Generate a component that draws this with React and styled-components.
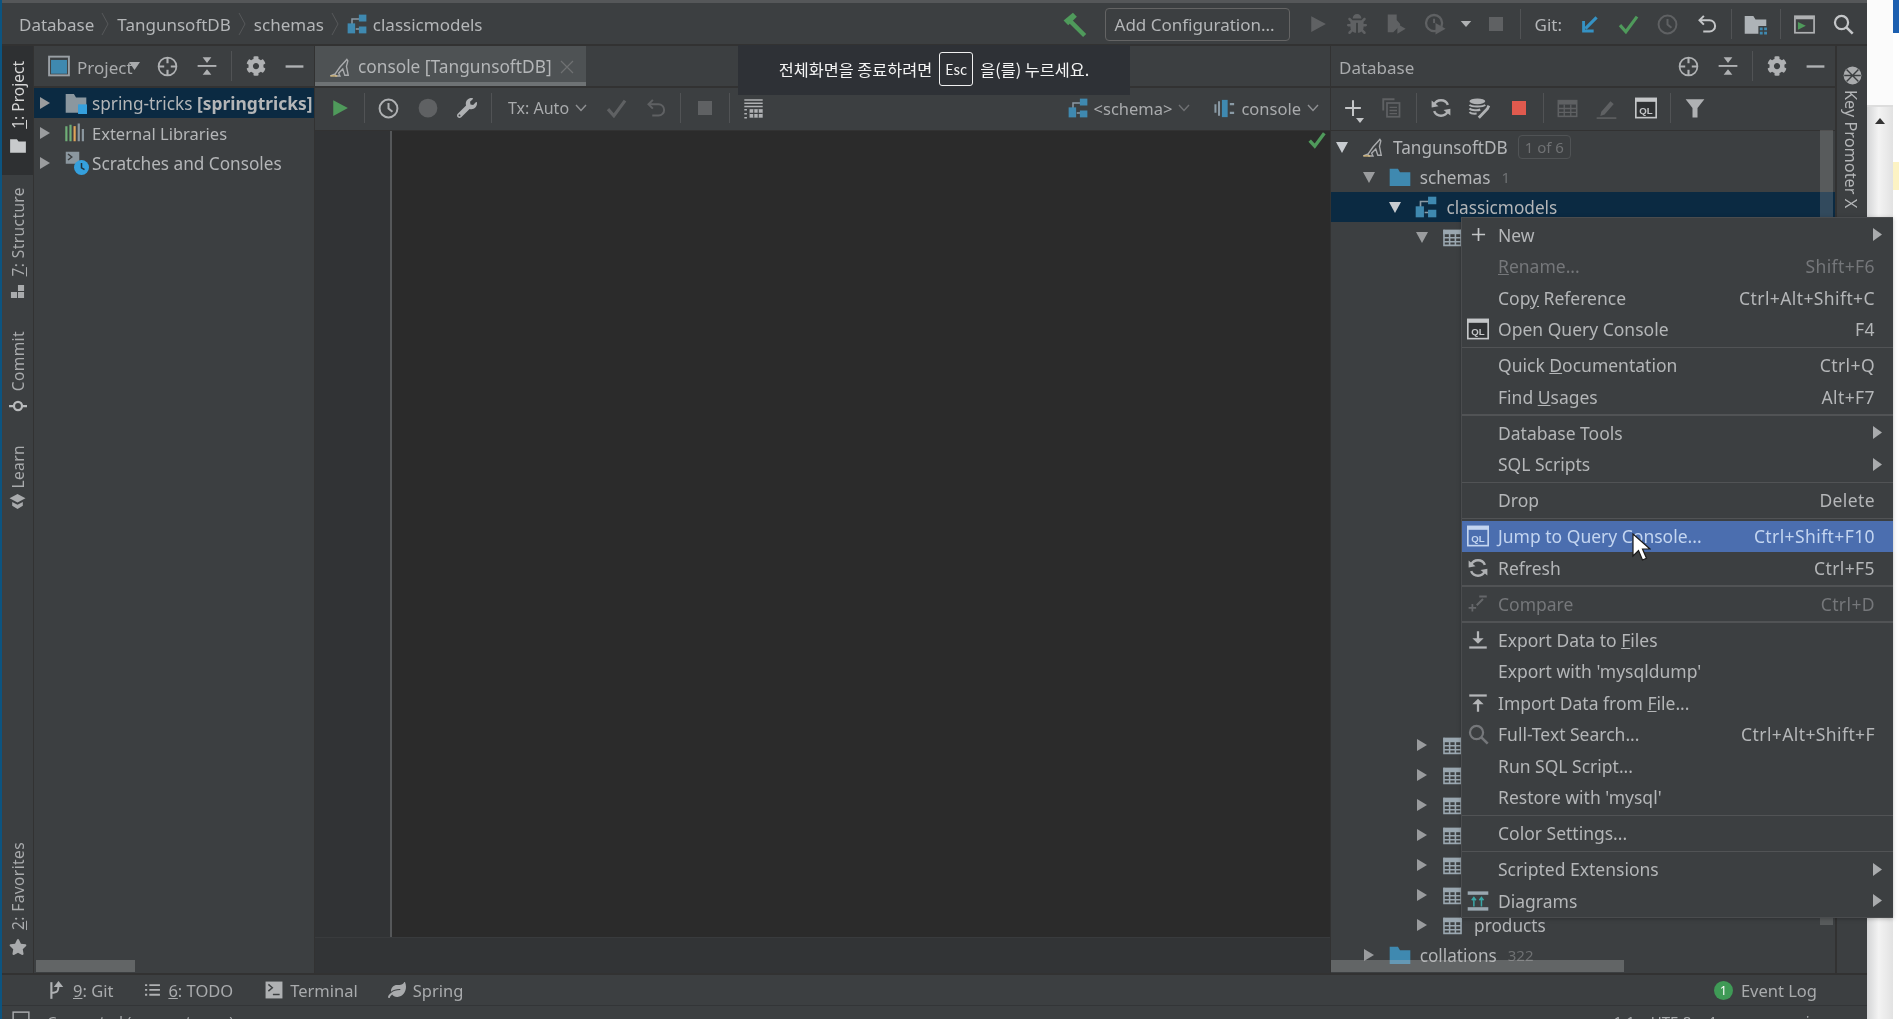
import React from 'react';
import styled, { createGlobalStyle } from 'styled-components';
import { FaCog, FaWrench, FaBug, FaLeaf, FaStar } from 'react-icons/fa';

const GlobalStyle = createGlobalStyle`
    html, body {
        margin: 0;
        height: 100%;
        overflow: hidden;
        background: #fff;
        font-family: "Noto Sans", "Noto Sans CJK KR", sans-serif;
    }
`;

const Page = styled.div`
    width: 100vw;
    height: 100vh;
    display: flex;
    overflow: hidden;
    position: relative;
    color: #bbbbbb;
    font-size: 16px;
    filter: blur(0.35px);
`;

const DesktopEdge = styled.div`
    width: 2px;
    flex-shrink: 0;
    background: #0c5480;
`;

const Ide = styled.div`
    width: 1865px;
    flex-shrink: 0;
    display: flex;
    flex-direction: column;
    background: #3c3f41;
    border-top: 3px solid #555759;
    box-sizing: border-box;
`;

const NavBar = styled.div`
    height: 43px;
    flex-shrink: 0;
    display: flex;
    align-items: center;
    padding: 1px 4px 0 17px;
    box-sizing: border-box;
    border-bottom: 2px solid #323232;
`;

const Crumb = styled.span`
    margin-left: ${(p) => p.$ml || 0}px;
    font-size: 17px;
    color: #b4b6b8;
    white-space: nowrap;
`;

const CrumbSep = styled.svg`
    width: 8px;
    height: 26px;
    margin: 0 8px 0 7px;
    flex-shrink: 0;
`;

const NavRight = styled.div`
    margin-left: auto;
    display: flex;
    align-items: center;
`;

const ConfigButton = styled.div`
    width: 185px;
    height: 33px;
    box-sizing: border-box;
    margin: 0 9px 0 11px;
    padding-left: 9px;
    border: 1px solid #646464;
    border-radius: 4px;
    display: flex;
    align-items: center;
    font-size: 17px;
    color: #b4b6b8;
    white-space: nowrap;
`;

const Slot = styled.div`
    width: ${(p) => p.$w || 39}px;
    height: 30px;
    margin-left: ${(p) => p.$ml || 0}px;
    flex-shrink: 0;
    display: flex;
    align-items: center;
    justify-content: center;
    position: relative;
    color: ${(p) => p.$c || '#afb1b3'};
`;

const Sep = styled.div`
    width: 1px;
    height: 30px;
    margin: 0 4.5px;
    flex-shrink: 0;
    background: #515355;
`;

const GitLabel = styled.span`
    margin: 0 8px 0 9px;
    font-size: 17px;
    color: #b4b6b8;
`;

const Main = styled.div`
    flex: 1;
    min-height: 0;
    display: flex;
`;

const LeftStripe = styled.div`
    width: 31px;
    flex-shrink: 0;
    display: flex;
    flex-direction: column;
    border-right: 1px solid #323232;
`;

const StripeItem = styled.div`
    display: flex;
    flex-direction: column;
    align-items: center;
    gap: ${(p) => p.$gap || 8}px;
    padding: ${(p) => p.$pad || '0'};
    margin-top: ${(p) => p.$mt || '0'};
    background: ${(p) => (p.$active ? '#2e3032' : 'transparent')};
    color: ${(p) => (p.$active ? '#d6d6d6' : '#a9abad')};
`;

const StripeText = styled.span`
    writing-mode: vertical-rl;
    transform: rotate(180deg);
    font-size: 15.5px;
    line-height: 18px;
    letter-spacing: ${(p) => p.$track || 0.4}px;
    white-space: nowrap;
`;

const ProjectPanel = styled.div`
    width: 281px;
    flex-shrink: 0;
    display: flex;
    flex-direction: column;
    position: relative;
    border-right: 1px solid #323232;
    box-sizing: border-box;
`;

const PanelHeader = styled.div`
    height: 42px;
    flex-shrink: 0;
    display: flex;
    align-items: center;
    box-sizing: border-box;
    border-bottom: 2px solid #323232;
`;

const ViewPicker = styled.div`
    width: 100px;
    padding-left: 14px;
    flex-shrink: 0;
    display: flex;
    align-items: center;
    gap: 7px;
`;

const PickerLabel = styled.span`
    margin-top: 3px;
    font-size: 17px;
    color: #a9abad;
`;

const PickerCaret = styled.svg`
    width: 11px;
    height: 8px;
    margin-left: -11px;
    flex-shrink: 0;
`;

const Tree = styled.div`
    flex: 1;
    min-height: 0;
    padding-top: ${(p) => p.$top}px;
`;

const TreeRow = styled.div`
    height: 30px;
    display: flex;
    align-items: center;
    padding-left: ${(p) => 5 + (p.$depth || 0) * 26.7}px;
    background: ${(p) => (p.$selected ? '#0b2a42' : 'transparent')};
    white-space: nowrap;
`;

const TreeGap = styled.div`
    height: ${(p) => p.$h}px;
`;

const Arrow = styled.svg`
    width: 12px;
    height: 14px;
    margin-right: ${(p) => p.$mr || 14}px;
    flex-shrink: 0;
`;

const TreeLabel = styled.span`
    margin-left: ${(p) => p.$ml || 9}px;
    font-size: ${(p) => p.$size || 17.2}px;
    color: #b4b6b8;
`;

const Bold = styled.b`
    font-weight: 700;
    font-size: 17.4px;
`;

const Count = styled.span`
    margin-left: 11px;
    font-size: 15px;
    color: #6f7173;
`;

const Badge = styled.span`
    margin-left: 10px;
    padding: 1px 6px;
    border: 1px solid #505355;
    border-radius: 4px;
    font-size: 15px;
    line-height: 20px;
    color: #6f7173;
`;

const HScroll = styled.div`
    position: absolute;
    left: ${(p) => p.$left}px;
    bottom: 1px;
    width: ${(p) => p.$w}px;
    height: 12px;
    background: rgba(190, 190, 190, 0.3);
`;

const VScroll = styled.div`
    position: absolute;
    top: 84px;
    right: 2px;
    width: 13px;
    height: 795px;
    background: rgba(190, 190, 190, 0.22);
`;

const EditorColumn = styled.div`
    flex: 1;
    min-width: 0;
    display: flex;
    flex-direction: column;
`;

const TabRow = styled.div`
    height: 42px;
    flex-shrink: 0;
    display: flex;
    border-bottom: 2px solid #323232;
    box-sizing: border-box;
`;

const Tab = styled.div`
    width: 271px;
    height: 40px;
    box-sizing: border-box;
    padding: 5px 12px 0 14px;
    display: flex;
    align-items: center;
    background: #4e5254;
    border-bottom: 4px solid #6e7274;
`;

const TabTitle = styled.span`
    margin-left: 7px;
    font-size: 17.3px;
    color: #b4b6b8;
    white-space: nowrap;
`;

const TabClose = styled.svg`
    width: 14px;
    height: 14px;
    margin-left: auto;
    flex-shrink: 0;
`;

const EditorToolbar = styled.div`
    height: 43px;
    flex-shrink: 0;
    display: flex;
    align-items: center;
    padding: 0 0 2px 5px;
    border-bottom: 1px solid #323232;
    box-sizing: border-box;
`;

const TxLabel = styled.span`
    margin-left: 12px;
    font-size: 16px;
    color: #a9abad;
    white-space: nowrap;
`;

const Chevron = styled.svg`
    width: 12px;
    height: 8px;
    margin: ${(p) => p.$m || '0 0 0 6px'};
    flex-shrink: 0;
`;

const ToolbarRight = styled.div`
    margin-left: auto;
    padding-right: 11px;
    display: flex;
    align-items: center;
`;

const SelectorLabel = styled.span`
    margin-left: ${(p) => p.$ml || 6}px;
    font-size: 16.5px;
    color: #a9abad;
    white-space: nowrap;
`;

const SelectorIcon = styled.div`
    margin-left: ${(p) => p.$ml || 0}px;
    display: flex;
`;

const EditorBody = styled.div`
    flex: 1;
    min-height: 0;
    display: flex;
    background: #2b2b2b;
`;

const Gutter = styled.div`
    width: 75px;
    flex-shrink: 0;
    background: #313335;
    border-right: 2px solid #555759;
`;

const CodeArea = styled.div`
    flex: 1;
    display: flex;
    justify-content: flex-end;
    padding: 0 4px 0 0;
`;

const EditorFooter = styled.div`
    height: 36px;
    flex-shrink: 0;
    background: #323436;
    border-top: 1px solid #393b3d;
    box-sizing: border-box;
`;

const DatabasePanel = styled.div`
    width: 505px;
    flex-shrink: 0;
    display: flex;
    flex-direction: column;
    position: relative;
    overflow: hidden;
    border-left: 1px solid #323232;
    box-sizing: border-box;
`;

const PanelTitle = styled.span`
    margin-left: 8px;
    margin-top: 3px;
    width: 337px;
    font-size: 17px;
    color: #a9abad;
`;

const DbToolbar = styled.div`
    height: 43px;
    flex-shrink: 0;
    display: flex;
    align-items: center;
    border-bottom: 1px solid #323232;
    box-sizing: border-box;
    padding: 0 0 2px 2px;
`;

const PlusCaret = styled.svg`
    position: absolute;
    right: 8px;
    bottom: 0;
    width: 8px;
    height: 5px;
`;

const RightStripe = styled.div`
    width: 32px;
    flex-shrink: 0;
    display: flex;
    flex-direction: column;
    align-items: center;
    gap: 5px;
    padding-top: 20px;
    box-sizing: border-box;
    border-left: 2px solid #323232;
`;

const KeyText = styled.span`
    writing-mode: vertical-rl;
    margin-right: 3px;
    font-size: 16.3px;
    color: #b4b6b8;
    white-space: nowrap;
    line-height: 18px;
`;

const BottomBar = styled.div`
    height: 33px;
    flex-shrink: 0;
    display: flex;
    align-items: center;
    padding: 0 49px 0 47px;
    border-top: 2px solid #323232;
    border-bottom: 1px solid #333537;
    box-sizing: border-box;
`;

const BottomTool = styled.div`
    display: flex;
    align-items: center;
    gap: ${(p) => p.$gap || 7}px;
    margin-right: ${(p) => p.$mr || 29}px;
    margin-left: ${(p) => p.$ml || 0};
    font-size: 16.5px;
    color: #a9abad;
`;

const EventDot = styled.span`
    width: 19px;
    height: 19px;
    border-radius: 50%;
    background: #3f9a56;
    color: #fff;
    font-size: 12px;
    display: flex;
    align-items: center;
    justify-content: center;
`;

const StatusBar = styled.div`
    height: 13px;
    flex-shrink: 0;
    display: flex;
    align-items: flex-start;
    overflow: hidden;
    padding: 5px 48px 0 10px;
    box-sizing: border-box;
    font-size: 15px;
    line-height: 20px;
    color: #a9abad;
`;

const StatusText = styled.span`
    margin-left: 17px;
    white-space: nowrap;
`;

const StatusRight = styled.div`
    margin-left: auto;
    display: flex;
    gap: 16px;
    white-space: nowrap;
`;

const BackWindow = styled.div`
    flex: 1;
    display: flex;
`;

const BackGutter = styled.div`
    width: 26px;
    flex-shrink: 0;
    display: flex;
    flex-direction: column;
    background: linear-gradient(90deg, #d4d5d6, #f3f3f3 45%, #e2e2e2);
`;

const BackTop = styled.div`
    height: 105px;
    background: #fbfbfb;
    border-bottom: 2px solid #dddddd;
`;

const ScrollUp = styled.div`
    width: 0;
    height: 0;
    margin: 11px auto 0;
    border-left: 5px solid transparent;
    border-right: 5px solid transparent;
    border-bottom: 6px solid #333;
`;

const BackSide = styled.div`
    flex: 1;
    background: #fff;
`;

const BackBlue = styled.div`
    height: 33px;
    background: #1c5fb0;
`;

const BackYellow = styled.div`
    margin-top: 129px;
    height: 28px;
    background: #fdf3c4;
`;

const ToastBar = styled.div`
    position: absolute;
    top: 45px;
    left: 738px;
    width: 392px;
    height: 50px;
    display: flex;
    align-items: center;
    justify-content: center;
    gap: 7px;
    padding-bottom: 2px;
    box-sizing: border-box;
    background: #2e3136;
    color: #f4f4f4;
    font-size: 16.3px;
    white-space: nowrap;
    font-family: "Noto Sans CJK KR", "Noto Sans", sans-serif;
`;

const EscKey = styled.span`
    width: 34px;
    height: 34px;
    box-sizing: border-box;
    border: 1px solid #f0f0f0;
    border-radius: 3px;
    display: flex;
    align-items: center;
    justify-content: center;
    font-size: 14px;
`;

const ContextMenu = styled.div`
    position: absolute;
    top: 217px;
    left: 1461px;
    width: 432px;
    height: 701px;
    padding-top: 1px;
    box-sizing: border-box;
    background: #3c3f41;
    border: 1px solid #4a4c4e;
    border-width: 1px 0 1px 1px;
    box-shadow: 0 1px 4px rgba(0, 0, 0, 0.25);
`;

const MenuRow = styled.div`
    height: 31.5px;
    display: flex;
    align-items: center;
    padding-right: 18px;
    background: ${(p) => (p.$active ? '#4b6eaf' : 'transparent')};
    color: ${(p) => (p.$active ? '#c3d5f0' : p.$disabled ? '#75777a' : '#b4b6b8')};
    font-size: 17.5px;
    white-space: nowrap;
`;

const MenuIcon = styled.div`
    width: 22px;
    margin: 0 9px 0 5px;
    flex-shrink: 0;
    display: flex;
    justify-content: center;
`;

const Shortcut = styled.span`
    margin-left: auto;
    letter-spacing: 0.4px;
`;

const SubArrow = styled.svg`
    width: 9px;
    height: 13px;
    margin: 0 -7px 0 auto;
`;

const MenuSep = styled.div`
    height: 1.5px;
    margin: 1.5px 0;
    background: #515355;
`;

const Cursor = styled.svg`
    position: absolute;
    top: 533px;
    left: 1631px;
    width: 20px;
    height: 30px;
`;

const Ico = styled.svg.attrs({ viewBox: '0 0 16 16', fill: 'none' })`
    width: ${(p) => p.$s || 20}px;
    height: ${(p) => p.$s || 20}px;
    flex-shrink: 0;
    display: block;
`;

const Tri = ({ open, light }) => (
    <Arrow viewBox="0 0 12 14">
        {open ? (
            <polygon points="0,2 12,2 6,13" fill={light ? '#c8ccd0' : '#9a9c9e'} />
        ) : (
            <polygon points="1,1 11,7 1,13" fill="#9a9c9e" />
        )}
    </Arrow>
);

const CrumbArrow = () => (
    <CrumbSep viewBox="0 0 8 26">
        <path d="M1 2l6 11-6 11" stroke="#56585a" strokeWidth="1" fill="none" />
    </CrumbSep>
);

const Folder = ({ s = 22, c = '#3f89b0' }) => (
    <Ico $s={s}>
        <path d="M0.5 2h6l1.5 2.5h7.5v10H0.5z" fill={c} />
    </Ico>
);

const ModuleFolder = () => (
    <Ico $s={22}>
        <path d="M0.5 1.5h6L8 4h7.5v6H10v5H0.5z" fill="#8b979f" />
        <rect x="9.5" y="9" width="6.5" height="7" fill="#35a0dd" />
    </Ico>
);

const Libraries = () => (
    <Ico $s={22}>
        <path d="M1 3v11M4 2v12" stroke="#6fae77" strokeWidth="1.6" />
        <path d="M7 3v11" stroke="#e0a458" strokeWidth="1.6" />
        <path d="M10 1v13M13 5v9" stroke="#8b979f" strokeWidth="1.6" />
    </Ico>
);

const Scratches = () => (
    <Ico $s={24}>
        <rect x="0.5" y="0.5" width="9" height="8" fill="#8b979f" />
        <path d="M2 2l2.5 2L2 6" stroke="#3c3f41" strokeWidth="1" />
        <circle cx="11" cy="11" r="5" fill="#35a0dd" />
        <path d="M11 8v3.2l2 1.2" stroke="#22313c" strokeWidth="1" />
    </Ico>
);

const Schema = ({ s = 22 }) => (
    <Ico $s={s}>
        <path d="M4 8V4h7M7 12h3" stroke="#8a9aa5" strokeWidth="1.2" />
        <rect x="9.5" y="0.5" width="6" height="5.5" fill="#3f89b0" />
        <rect x="0.5" y="7.5" width="6" height="8" fill="#3f89b0" />
        <rect x="9.5" y="10" width="6" height="5.5" fill="#3f89b0" />
    </Ico>
);

const TableGrid = ({ s = 21, c = '#9aa7b0' }) => (
    <Ico $s={s}>
        <rect x="1" y="2" width="14" height="3.5" fill={c} />
        <path d="M1.5 2v12h13V2M1.5 8.2h13M1.5 11.2h13M5.8 5v9M10.2 5v9" stroke={c} strokeWidth="1.2" />
    </Ico>
);

const Dolphin = ({ s = 22 }) => (
    <Ico $s={s}>
        <path d="M1 14.5l3.5-1.5L8 8l5-5.5.7 1-1 4 1.3 6.5h-2.5L10 9.5 7 12.5l1 2H5L4 13" stroke="#a9abad" strokeWidth="1" />
        <path d="M1 14.5h5" stroke="#d6b87a" strokeWidth="1" />
    </Ico>
);

const ConsoleDb = () => (
    <Ico $s={23}>
        <path d="M1 5v6M3.5 3v10" stroke="#8a9aa5" strokeWidth="1.4" />
        <rect x="5.5" y="2" width="4" height="12" fill="#3f89b0" />
        <path d="M11 5h3M11 11h3" stroke="#8a9aa5" strokeWidth="1.6" />
    </Ico>
);

const Crosshair = () => (
    <Ico $s={21}>
        <circle cx="8" cy="8" r="6.8" stroke="#afb1b3" strokeWidth="1.3" />
        <path d="M8 1v4.5M8 10.5V15M1 8h4.5M10.5 8H15" stroke="#afb1b3" strokeWidth="1.6" />
    </Ico>
);

const CollapseAll = () => (
    <Ico $s={20}>
        <path d="M0.5 7.2h15v1.5H0.5z" fill="#afb1b3" />
        <path d="M4.5 1h7L8 5.5zM8 10.5l3.5 4.5h-7z" fill="#afb1b3" />
    </Ico>
);

const Minimize = () => (
    <Ico $s={19}>
        <rect x="0.5" y="7" width="15" height="2" fill="#afb1b3" />
    </Ico>
);

const Play = ({ c, s = 18 }) => (
    <Ico $s={s}>
        <polygon points="2,1 15,8 2,15" fill={c} />
    </Ico>
);

const Stop = ({ c, s = 16 }) => (
    <Ico $s={s}>
        <rect x="1" y="1" width="14" height="14" fill={c} />
    </Ico>
);

const Clock = ({ c }) => (
    <Ico $s={21}>
        <circle cx="8" cy="8" r="6.8" stroke={c} strokeWidth="1.5" />
        <path d="M8 3.8V8l3 2.5" stroke={c} strokeWidth="1.5" />
    </Ico>
);

const Check = ({ c, s = 21, w = 2.4 }) => (
    <Ico $s={s}>
        <path d="M1.5 8.5l4.5 5L14.5 2" stroke={c} strokeWidth={w} />
    </Ico>
);

const Undo = ({ c, s = 20 }) => (
    <Ico $s={s}>
        <path d="M5.5 1.5L2 5l3.5 3.5" stroke={c} strokeWidth="1.6" />
        <path d="M2.5 5H10a4.3 4.3 0 0 1 0 9H5" stroke={c} strokeWidth="1.6" />
    </Ico>
);

const Hammer = () => (
    <Ico $s={25}>
        <path d="M1 5.5L7 0.5l2.5 2.5L4 8.5z" fill="#4f9a5b" />
        <path d="M5.5 4l10 10-2 2-10-10z" fill="#4f9a5b" />
    </Ico>
);

const Coverage = () => (
    <Ico $s={22}>
        <path d="M2 1h6.5v4L11 8v1l-5 5H2z" fill="#5f6163" />
        <polygon points="9,8 15,11.5 9,15" fill="#5f6163" />
    </Ico>
);

const Profile = () => (
    <Ico $s={23}>
        <circle cx="7" cy="7" r="5.6" stroke="#5f6163" strokeWidth="1.6" />
        <path d="M7 4v3" stroke="#5f6163" strokeWidth="1.4" />
        <polygon points="8,7 15,11 8,15" fill="#5f6163" />
    </Ico>
);

const SmallCaret = ({ c = '#afb1b3', s = 12 }) => (
    <Ico $s={s}>
        <polygon points="1,4 15,4 8,12" fill={c} />
    </Ico>
);

const GitUpdate = () => (
    <Ico $s={19}>
        <path d="M14 2L4.5 11.5" stroke="#3592c4" strokeWidth="2.6" />
        <path d="M3 5v8.5h8.5" stroke="#3592c4" strokeWidth="2.4" />
    </Ico>
);

const ProjectStructure = () => (
    <Ico $s={23}>
        <path d="M0.5 2h6L8 4.5h7.5V9H10v5.5H0.5z" fill="#aeb3b7" />
        <path d="M11 10h2v2h-2zM14 10h2v2h-2zM11 13h2v2h-2zM14 13h2v2h-2z" fill="#3f89b0" />
    </Ico>
);

const TerminalBox = () => (
    <Ico $s={21}>
        <rect x="0.7" y="1.7" width="14.6" height="12.6" stroke="#afb1b3" strokeWidth="1.3" />
        <rect x="1" y="2" width="14" height="2" fill="#afb1b3" />
        <polygon points="3,6 9,9 3,12" fill="#4f9a5b" />
    </Ico>
);

const Search = ({ c = '#c4c6c8', s = 21 }) => (
    <Ico $s={s}>
        <circle cx="6.5" cy="6.5" r="5" stroke={c} strokeWidth="1.7" />
        <path d="M10.2 10.2L15 15" stroke={c} strokeWidth="2" />
    </Ico>
);

const ProjectView = () => (
    <Ico $s={22}>
        <rect x="0.8" y="1.2" width="14.4" height="13.6" stroke="#9aa0a5" strokeWidth="1.4" />
        <rect x="2.2" y="3.6" width="11.6" height="10" fill="#3f89b0" />
    </Ico>
);

const ResultTable = () => (
    <Ico $s={21}>
        <path d="M1 1.5h14M1 4h14M1 6.5h14" stroke="#afb1b3" strokeWidth="1.2" />
        <path d="M1 9h2M1 12h2M1 15h2" stroke="#afb1b3" strokeWidth="1.2" />
        <rect x="5" y="8.5" width="10" height="6.5" fill="#afb1b3" />
        <path d="M8.2 8.5v6.5M11.6 8.5v6.5M5 11.7h10" stroke="#3c3f41" strokeWidth="0.8" />
    </Ico>
);

const Plus = ({ c = '#c4c6c8', s = 18 }) => (
    <Ico $s={s}>
        <path d="M8 1v14M1 8h14" stroke={c} strokeWidth="1.8" />
    </Ico>
);

const CopyDoc = () => (
    <Ico $s={20}>
        <path d="M1 10V1h9" stroke="#5f6163" strokeWidth="1.5" />
        <rect x="4" y="4" width="10" height="11" stroke="#5f6163" strokeWidth="1.4" />
        <path d="M6 7.5h6M6 10h6M6 12.5h6" stroke="#5f6163" strokeWidth="1.1" />
    </Ico>
);

const Refresh = ({ s = 20 }) => (
    <Ico $s={s}>
        <path d="M13.5 5.5A6 6 0 0 0 2.5 5.5" stroke="#afb1b3" strokeWidth="2" />
        <path d="M2.5 10.5a6 6 0 0 0 11 0" stroke="#afb1b3" strokeWidth="2" />
        <polygon points="0.5,2 6,6.5 0.5,7.5" fill="#afb1b3" />
        <polygon points="15.5,14 10,9.5 15.5,8.5" fill="#afb1b3" />
    </Ico>
);

const DbTools = () => (
    <Ico $s={23}>
        <ellipse cx="6.5" cy="3" rx="5.5" ry="2" fill="#afb1b3" />
        <path d="M1 5.5c1.5 1.5 9.5 1.5 11 0M1 8c1.5 1.5 6 1.5 7.5.7M1 10.5c1 1 3 1.2 5 1" stroke="#afb1b3" strokeWidth="1.4" />
        <path d="M14.5 6l-1 2.2-6 6.3" stroke="#afb1b3" strokeWidth="2" />
    </Ico>
);

const DataTable = () => (
    <Ico $s={21}>
        <rect x="1" y="2" width="14" height="12" stroke="#5f6163" strokeWidth="1.2" />
        <rect x="1" y="2" width="14" height="3" fill="#5f6163" />
        <path d="M1 8h14M1 11h14M5.5 5v9M10.5 5v9" stroke="#5f6163" strokeWidth="1" />
    </Ico>
);

const Pencil = () => (
    <Ico $s={21}>
        <path d="M4 10.5l7-8 2.5 2-7 8-3.2 1.2z" fill="#5f6163" />
        <path d="M0.5 15.3h15" stroke="#5f6163" strokeWidth="1.2" />
    </Ico>
);

const QlBox = ({ s = 22, c = '#c4c6c8', fill = '#2f3133' }) => (
    <Ico $s={s}>
        <rect x="0.6" y="1" width="14.8" height="14" stroke={c} strokeWidth="1.2" fill={fill} />
        <rect x="0.6" y="1" width="14.8" height="2.5" fill={c} />
        <text x="8" y="12" textAnchor="middle" fontSize="7" fontWeight="700" fill={c} fontFamily="Liberation Sans, sans-serif">QL</text>
    </Ico>
);

const Funnel = () => (
    <Ico $s={20}>
        <path d="M0.5 1h15L10 8v7.5H6V8z" fill="#afb1b3" />
    </Ico>
);

const KeyIcon = () => (
    <Ico $s={19}>
        <circle cx="8" cy="8" r="7.5" fill="#a9abad" />
        <path d="M3 3l10 10M13 3L3 13M1 8h14" stroke="#3c3f41" strokeWidth="1.2" />
    </Ico>
);

const StripeFolder = ({ c }) => (
    <Ico $s={18}>
        <path d="M1 2h6l1.5 2H15v10H1z" fill={c} />
    </Ico>
);

const StructureIcon = () => (
    <Ico $s={15}>
        <path d="M8.5 1H15v6.5H8.5zM1 8.5h6.5V15H1zM8.5 8.5H15V15H8.5z" fill="#a9abad" />
    </Ico>
);

const CommitIcon = () => (
    <Ico $s={18}>
        <circle cx="8" cy="8" r="3.6" stroke="#b8babc" strokeWidth="2" />
        <path d="M0 8h4M12 8h4" stroke="#b8babc" strokeWidth="2" />
    </Ico>
);

const LearnIcon = () => (
    <Ico $s={17}>
        <path d="M8 1l7.5 4L8 9 0.5 5z" fill="#a9abad" />
        <path d="M3 8.5V12l5 3 5-3V8.5L8 11z" fill="#a9abad" />
    </Ico>
);

const GitBranch = () => (
    <Ico $s={19}>
        <path d="M2 1v14" stroke="#afb1b3" strokeWidth="1.8" />
        <path d="M2 10c5 0 6-1 6-7" stroke="#afb1b3" strokeWidth="1.6" />
        <polygon points="8,0 12,5 4,5" fill="#afb1b3" />
    </Ico>
);

const TodoList = () => (
    <Ico $s={17}>
        <path d="M1 3h2M1 7.5h2M1 12h2M5 3h10M5 7.5h10M5 12h10" stroke="#afb1b3" strokeWidth="1.7" />
    </Ico>
);

const TerminalTool = () => (
    <Ico $s={18}>
        <rect x="0.5" y="0.5" width="15" height="15" fill="#afb1b3" />
        <path d="M3 3l3.5 3L3 9" stroke="#3c3f41" strokeWidth="1.3" />
        <path d="M7 12h6" stroke="#3c3f41" strokeWidth="1.3" />
    </Ico>
);

const DownloadIcon = () => (
    <Ico $s={20}>
        <path d="M8 1v9" stroke="#b4b6b8" strokeWidth="1.8" />
        <polygon points="3.5,6.5 12.5,6.5 8,11" fill="#b4b6b8" />
        <path d="M1 14h14" stroke="#b4b6b8" strokeWidth="1.8" />
    </Ico>
);

const UploadIcon = () => (
    <Ico $s={20}>
        <path d="M1 2h14" stroke="#b4b6b8" strokeWidth="1.8" />
        <polygon points="3.5,9 12.5,9 8,4.5" fill="#b4b6b8" />
        <path d="M8 8v7" stroke="#b4b6b8" strokeWidth="1.8" />
    </Ico>
);

const CompareIcon = () => (
    <Ico $s={20}>
        <path d="M0.5 11h6M3.5 8v6" stroke="#65676a" strokeWidth="1.4" />
        <path d="M7 9l5-5M9 2h6" stroke="#65676a" strokeWidth="1.6" />
    </Ico>
);

const DiagramIcon = () => (
    <Ico $s={22}>
        <rect x="0.5" y="1" width="15" height="2.5" fill="#9aa7b0" />
        <rect x="0.5" y="12.5" width="15" height="2.5" fill="#9aa7b0" />
        <path d="M5 12V6M3.5 7.5L5 5.5l1.5 2M10.5 12V6M9 7.5l1.5-2 1.5 2" stroke="#3aa6a6" strokeWidth="1.1" />
    </Ico>
);

const menuItems = [
    { label: 'New', icon: <Plus s={15} />, sub: true },
    { label: <><u>R</u>ename...</>, keys: 'Shift+F6', disabled: true },
    { label: <>Cop<u>y</u> Reference</>, keys: 'Ctrl+Alt+Shift+C' },
    { label: 'Open Query Console', icon: <QlBox />, keys: 'F4' },
    { sep: true },
    { label: <>Quick <u>D</u>ocumentation</>, keys: 'Ctrl+Q' },
    { label: <>Find <u>U</u>sages</>, keys: 'Alt+F7' },
    { sep: true },
    { label: 'Database Tools', sub: true },
    { label: 'SQL Scripts', sub: true },
    { sep: true },
    { label: 'Drop', keys: 'Delete' },
    { sep: true },
    { label: 'Jump to Query Console...', icon: <QlBox c="#c3d5f0" fill="#4b6eaf" />, keys: 'Ctrl+Shift+F10', active: true },
    { label: 'Refresh', icon: <Refresh />, keys: 'Ctrl+F5' },
    { sep: true },
    { label: 'Compare', icon: <CompareIcon />, keys: 'Ctrl+D', disabled: true },
    { sep: true },
    { label: <>Export Data to <u>F</u>iles</>, icon: <DownloadIcon /> },
    { label: "Export with 'mysqldump'" },
    { label: <>Import Data from <u>F</u>ile...</>, icon: <UploadIcon /> },
    { label: 'Full-Text Search...', icon: <Search c="#75777a" />, keys: 'Ctrl+Alt+Shift+F' },
    { label: 'Run SQL Script...' },
    { label: "Restore with 'mysql'" },
    { sep: true },
    { label: 'Color Settings...' },
    { sep: true },
    { label: 'Scripted Extensions', sub: true },
    { label: 'Diagrams', icon: <DiagramIcon />, sub: true },
];

const App = () => {
    return (
        <Page>
            <GlobalStyle />
            <DesktopEdge />
            <Ide>
                <NavBar>
                    <Crumb>Database</Crumb>
                    <CrumbArrow />
                    <Crumb>TangunsoftDB</Crumb>
                    <CrumbArrow />
                    <Crumb>schemas</Crumb>
                    <CrumbArrow />
                    <Schema s={20} />
                    <Crumb $ml={6}>classicmodels</Crumb>
                    <NavRight>
                        <Slot><Hammer /></Slot>
                        <ConfigButton>Add Configuration...</ConfigButton>
                        <Slot><Play c="#5f6163" /></Slot>
                        <Slot $c="#5f6163"><FaBug size={20} /></Slot>
                        <Slot><Coverage /></Slot>
                        <Slot><Profile /></Slot>
                        <Slot $w={22}><SmallCaret /></Slot>
                        <Slot><Stop c="#5f6163" /></Slot>
                        <Sep />
                        <GitLabel>Git:</GitLabel>
                        <Slot><GitUpdate /></Slot>
                        <Slot><Check c="#4f9a5b" /></Slot>
                        <Slot><Clock c="#5f6163" /></Slot>
                        <Slot><Undo c="#c4c6c8" /></Slot>
                        <Sep />
                        <Slot><ProjectStructure /></Slot>
                        <Sep />
                        <Slot><TerminalBox /></Slot>
                        <Slot><Search /></Slot>
                    </NavRight>
                </NavBar>
                <Main>
                    <LeftStripe>
                        <StripeItem $active $pad="15px 0 20px">
                            <StripeText $track={0.01}><u>1</u>: Project</StripeText>
                            <StripeFolder c="#c8cacc" />
                        </StripeItem>
                        <StripeItem $pad="12px 0 0">
                            <StripeText><u>7</u>: Structure</StripeText>
                            <StructureIcon />
                        </StripeItem>
                        <StripeItem $pad="32px 0 0" $gap={6}>
                            <StripeText>Commit</StripeText>
                            <CommitIcon />
                        </StripeItem>
                        <StripeItem $pad="30px 0 0" $gap={4}>
                            <StripeText>Learn</StripeText>
                            <LearnIcon />
                        </StripeItem>
                        <StripeItem $mt="auto" $pad="0 0 17px">
                            <StripeText><u>2</u>: Favorites</StripeText>
                            <FaStar size={18} />
                        </StripeItem>
                    </LeftStripe>
                    <ProjectPanel>
                        <PanelHeader>
                            <ViewPicker>
                                <ProjectView />
                                <PickerLabel>Project</PickerLabel>
                                <PickerCaret viewBox="0 0 11 8">
                                    <polygon points="0,0 11,0 5.5,8" fill="#a9abad" />
                                </PickerCaret>
                            </ViewPicker>
                            <Slot><Crosshair /></Slot>
                            <Slot><CollapseAll /></Slot>
                            <Sep />
                            <Slot><FaCog size={20} /></Slot>
                            <Slot><Minimize /></Slot>
                        </PanelHeader>
                        <Tree $top={0}>
                            <TreeRow $selected>
                                <Tri />
                                <ModuleFolder />
                                <TreeLabel $ml={5}>spring-tricks <Bold>[springtricks]</Bold></TreeLabel>
                            </TreeRow>
                            <TreeRow>
                                <Tri />
                                <Libraries />
                                <TreeLabel $ml={5} $size={16.5}>External Libraries</TreeLabel>
                            </TreeRow>
                            <TreeRow>
                                <Tri />
                                <Scratches />
                                <TreeLabel $ml={3}>Scratches and Consoles</TreeLabel>
                            </TreeRow>
                        </Tree>
                        <HScroll $left={2} $w={99} />
                    </ProjectPanel>
                    <EditorColumn>
                        <TabRow>
                            <Tab>
                                <Dolphin />
                                <TabTitle>console [TangunsoftDB]</TabTitle>
                                <TabClose viewBox="0 0 14 14">
                                    <path d="M1 1l12 12M13 1L1 13" stroke="#6f7173" strokeWidth="1.2" />
                                </TabClose>
                            </Tab>
                        </TabRow>
                        <EditorToolbar>
                            <Slot><Play c="#4f9a5b" /></Slot>
                            <Sep />
                            <Slot><Clock c="#afb1b3" /></Slot>
                            <Slot $c="#5f6163"><Ico $s={20}><circle cx="8" cy="8" r="7.5" fill="#5f6163" /></Ico></Slot>
                            <Slot><FaWrench size={20} /></Slot>
                            <Sep />
                            <TxLabel>Tx: Auto</TxLabel>
                            <Chevron viewBox="0 0 12 8">
                                <path d="M1 1l5 5.5L11 1" stroke="#8f9193" strokeWidth="1.4" fill="none" />
                            </Chevron>
                            <Slot $ml={10}><Check c="#5f6163" /></Slot>
                            <Slot><Undo c="#5f6163" /></Slot>
                            <Sep />
                            <Slot><Stop c="#5f6163" /></Slot>
                            <Sep />
                            <Slot><ResultTable /></Slot>
                            <ToolbarRight>
                                <Schema s={20} />
                                <SelectorLabel>&lt;schema&gt;</SelectorLabel>
                                <Chevron viewBox="0 0 12 8" $m="0 0 0 6px">
                                    <path d="M1 1l5 5.5L11 1" stroke="#6f7173" strokeWidth="1.4" fill="none" />
                                </Chevron>
                                <SelectorIcon $ml={24}><ConsoleDb /></SelectorIcon>
                                <SelectorLabel $ml={4}>console</SelectorLabel>
                                <Chevron viewBox="0 0 12 8" $m="0 0 0 6px">
                                    <path d="M1 1l5 5.5L11 1" stroke="#8f9193" strokeWidth="1.4" fill="none" />
                                </Chevron>
                            </ToolbarRight>
                        </EditorToolbar>
                        <EditorBody>
                            <Gutter />
                            <CodeArea>
                                <Check c="#4f9a5b" s={18} w={3} />
                            </CodeArea>
                        </EditorBody>
                        <EditorFooter />
                    </EditorColumn>
                    <DatabasePanel>
                        <PanelHeader>
                            <PanelTitle>Database</PanelTitle>
                            <Slot><Crosshair /></Slot>
                            <Slot><CollapseAll /></Slot>
                            <Sep />
                            <Slot><FaCog size={20} /></Slot>
                            <Slot><Minimize /></Slot>
                        </PanelHeader>
                        <DbToolbar>
                            <Slot>
                                <Plus />
                                <PlusCaret viewBox="0 0 8 5">
                                    <polygon points="0,0 8,0 4,5" fill="#c4c6c8" />
                                </PlusCaret>
                            </Slot>
                            <Slot><CopyDoc /></Slot>
                            <Sep />
                            <Slot><Refresh /></Slot>
                            <Slot><DbTools /></Slot>
                            <Slot><Stop c="#e05a4e" /></Slot>
                            <Sep />
                            <Slot><DataTable /></Slot>
                            <Slot><Pencil /></Slot>
                            <Slot><QlBox /></Slot>
                            <Sep />
                            <Slot><Funnel /></Slot>
                        </DbToolbar>
                        <Tree $top={1}>
                            <TreeRow>
                                <Tri open light />
                                <Dolphin />
                                <TreeLabel>TangunsoftDB</TreeLabel>
                                <Badge>1 of 6</Badge>
                            </TreeRow>
                            <TreeRow $depth={1}>
                                <Tri open />
                                <Folder />
                                <TreeLabel>schemas</TreeLabel>
                                <Count>1</Count>
                            </TreeRow>
                            <TreeRow $depth={2} $selected>
                                <Tri open light />
                                <Schema />
                                <TreeLabel>classicmodels</TreeLabel>
                            </TreeRow>
                            <TreeRow $depth={3}>
                                <Tri open />
                                <TableGrid />
                            </TreeRow>
                            <TreeGap $h={478} />
                            {[0, 1, 2, 3, 4, 5].map((n) => (
                                <TreeRow $depth={3} key={n}>
                                    <Tri />
                                    <TableGrid />
                                </TreeRow>
                            ))}
                            <TreeRow $depth={3}>
                                <Tri />
                                <TableGrid />
                                <TreeLabel $ml={11}>products</TreeLabel>
                            </TreeRow>
                            <TreeRow $depth={1}>
                                <Tri />
                                <Folder />
                                <TreeLabel>collations</TreeLabel>
                                <Count>322</Count>
                            </TreeRow>
                        </Tree>
                        <VScroll />
                        <HScroll $left={0} $w={293} />
                    </DatabasePanel>
                    <RightStripe>
                        <KeyIcon />
                        <KeyText>Key Promoter X</KeyText>
                    </RightStripe>
                </Main>
                <BottomBar>
                    <BottomTool $gap={5} $mr={31}><GitBranch /><span><u>9</u>: Git</span></BottomTool>
                    <BottomTool $mr={32}><TodoList /><span><u>6</u>: TODO</span></BottomTool>
                    <BottomTool $mr={30}><TerminalTool />Terminal</BottomTool>
                    <BottomTool><FaLeaf size={18} />Spring</BottomTool>
                    <BottomTool $ml="auto" $mr={1} $gap={8}><EventDot>1</EventDot>Event Log</BottomTool>
                </BottomBar>
                <StatusBar>
                    <Ico $s={18}><rect x="1" y="1" width="14" height="14" stroke="#a9abad" strokeWidth="1.3" /></Ico>
                    <StatusText>Connected (moments ago)</StatusText>
                    <StatusRight>
                        <span>1:1</span>
                        <span>UTF-8</span>
                        <span>4 spaces</span>
                        <span>main</span>
                    </StatusRight>
                </StatusBar>
            </Ide>
            <BackWindow>
                <BackGutter>
                    <BackTop />
                    <ScrollUp />
                </BackGutter>
                <BackSide>
                    <BackBlue />
                    <BackYellow />
                </BackSide>
            </BackWindow>
            <ToastBar>
                전체화면을 종료하려면 <EscKey>Esc</EscKey> 을(를) 누르세요.
            </ToastBar>
            <ContextMenu>
                {menuItems.map((item, i) =>
                    item.sep ? (
                        <MenuSep key={i} />
                    ) : (
                        <MenuRow key={i} $active={item.active} $disabled={item.disabled}>
                            <MenuIcon>{item.icon}</MenuIcon>
                            <span>{item.label}</span>
                            {item.keys && <Shortcut>{item.keys}</Shortcut>}
                            {item.sub && (
                                <SubArrow viewBox="0 0 9 13">
                                    <polygon points="0,0 9,6.5 0,13" fill="#a9abad" />
                                </SubArrow>
                            )}
                        </MenuRow>
                    )
                )}
            </ContextMenu>
            <Cursor viewBox="0 0 20 30">
                <path d="M2 1v22l5.5-5.5 4 9.5 4-1.8-4-9.2h7.5z" fill="#fff" stroke="#1a1a1a" strokeWidth="1.2" />
            </Cursor>
        </Page>
    );
};

export default App;
